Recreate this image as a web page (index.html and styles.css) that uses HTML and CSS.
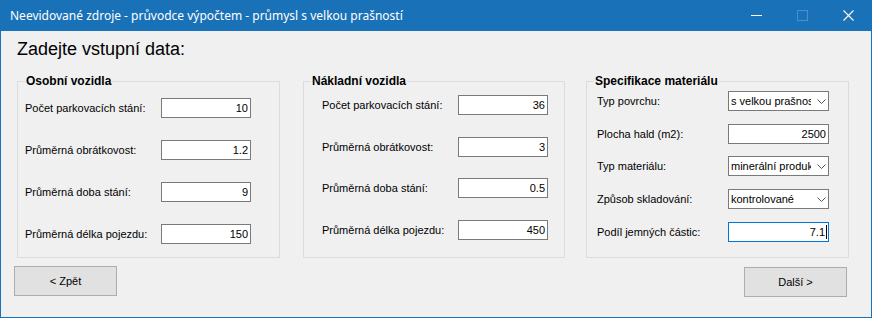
FILE: index.html
```html
<!DOCTYPE html>
<html lang="cs">
<head>
    <meta charset="UTF-8">
    <title>Neevidované zdroje</title>
    <link rel="stylesheet" href="styles.css">
</head>
<body>
    <div class="window">
        <div class="titlebar">
            <span class="title">Neevidované zdroje - průvodce výpočtem - průmysl s velkou prašností</span>
            <div class="controls">
                <span class="ctl ctl-min"></span>
                <span class="ctl ctl-max"></span>
                <svg class="ctl ctl-close" width="11" height="11" viewBox="0 0 11 11">
                    <path d="M0.5 0.5 L10.5 10.5 M10.5 0.5 L0.5 10.5" stroke="#fff" stroke-width="1.1"/>
                </svg>
            </div>
        </div>

        <div class="content">
            <h1>Zadejte vstupní data:</h1>

            <div class="groups">
                <fieldset class="group group-cars">
                    <legend>Osobní vozidla</legend>
                    <div class="rows">
                        <label>Počet parkovacích stání:</label><div class="textbox">10</div>
                        <label>Průměrná obrátkovost:</label><div class="textbox">1.2</div>
                        <label>Průměrná doba stání:</label><div class="textbox">9</div>
                        <label>Průměrná délka pojezdu:</label><div class="textbox">150</div>
                    </div>
                </fieldset>

                <fieldset class="group group-trucks">
                    <legend>Nákladní vozidla</legend>
                    <div class="rows">
                        <label>Počet parkovacích stání:</label><div class="textbox">36</div>
                        <label>Průměrná obrátkovost:</label><div class="textbox">3</div>
                        <label>Průměrná doba stání:</label><div class="textbox">0.5</div>
                        <label>Průměrná délka pojezdu:</label><div class="textbox">450</div>
                    </div>
                </fieldset>

                <fieldset class="group group-material">
                    <legend>Specifikace materiálu</legend>
                    <div class="rows">
                        <label>Typ povrchu:</label>
                        <div class="combo"><span class="combo-text">s velkou prašností</span><svg class="chevron" width="9" height="5" viewBox="0 0 9 5"><path d="M0.5 0.5 L4.5 4.5 L8.5 0.5" fill="none" stroke="#555" stroke-width="1"/></svg></div>
                        <label>Plocha hald (m2):</label><div class="textbox">2500</div>
                        <label>Typ materiálu:</label>
                        <div class="combo"><span class="combo-text">minerální produkty</span><svg class="chevron" width="9" height="5" viewBox="0 0 9 5"><path d="M0.5 0.5 L4.5 4.5 L8.5 0.5" fill="none" stroke="#555" stroke-width="1"/></svg></div>
                        <label>Způsob skladování:</label>
                        <div class="combo"><span class="combo-text">kontrolované</span><svg class="chevron" width="9" height="5" viewBox="0 0 9 5"><path d="M0.5 0.5 L4.5 4.5 L8.5 0.5" fill="none" stroke="#555" stroke-width="1"/></svg></div>
                        <label>Podíl jemných částic:</label><div class="textbox focused">7.1<span class="caret"></span></div>
                    </div>
                </fieldset>
            </div>

            <div class="buttons">
                <button class="btn btn-back">&lt; Zpět</button>
                <button class="btn btn-next">Další &gt;</button>
            </div>
        </div>
    </div>
</body>
</html>
```

FILE: styles.css
```css
body {
    margin: 0;
    padding: 0;
    background-color: #f0f0f0;
    font-family: "Liberation Sans", Arial, sans-serif;
}

.window {
    width: 872px;
    height: 318px;
    display: flex;
    flex-direction: column;
}

.titlebar {
    height: 31px;
    flex: none;
    background-color: #1971b8;
    color: #fff;
    display: flex;
    align-items: center;
    justify-content: space-between;
    padding-left: 10px;
}

.title {
    font-family: "Noto Sans", "Open Sans", sans-serif;
    font-size: 12px;
    padding-bottom: 1px;
}

.controls {
    display: flex;
    align-items: center;
    gap: 35px;
    padding-right: 18px;
}

.ctl {
    display: block;
    width: 11px;
    height: 11px;
    box-sizing: border-box;
}

.ctl-min {
    height: 1px;
    background-color: #fff;
}

.ctl-max {
    border: 1px solid #4d90c9;
}

.content {
    flex: 1;
    border: 1px solid #1971b8;
    border-top: none;
}

h1 {
    font-size: 18px;
    font-weight: normal;
    line-height: 21px;
    color: #000;
    margin: 8px 0 0 16px;
}

.groups {
    display: flex;
    margin: 14px 0 0 16px;
}

.group {
    box-sizing: border-box;
    height: 184px;
    margin: 0;
    padding: 0 7px;
    border: 1px solid #dcdcdc;
    font-size: 11px;
}

.group legend {
    font-size: 12px;
    font-weight: bold;
    line-height: 14px;
    padding: 0 1px;
    color: #000;
}

.group-cars {
    width: 263px;
}

.group-trucks {
    width: 262px;
    margin-left: 23px;
}

.group-material {
    width: 263px;
    margin-left: 21px;
}

.rows {
    display: grid;
    grid-template-columns: 136px 90px;
    grid-auto-rows: 20px;
    row-gap: 22px;
    align-items: center;
}

.group-cars .rows {
    padding-top: 10px;
}

.group-trucks .rows {
    padding-top: 7px;
    padding-left: 11px;
    row-gap: 21.7px;
}

.group-material .rows {
    padding-top: 3px;
    padding-left: 3px;
    grid-template-columns: 131px 101px;
    row-gap: 12.7px;
}

label {
    color: #000;
}

.textbox {
    box-sizing: border-box;
    height: 20px;
    background-color: #fff;
    border: 1px solid #7a7a7a;
    text-align: right;
    padding-right: 2px;
    line-height: 18px;
    font-size: 11px;
}

.textbox.focused {
    border-color: #0078d7;
    padding-right: 1px;
}

.caret {
    display: inline-block;
    width: 1px;
    height: 14px;
    background-color: #000;
    vertical-align: -3px;
    margin-left: 1px;
}

.combo {
    box-sizing: border-box;
    height: 20px;
    background-color: #fff;
    border: 1px solid #7a7a7a;
    display: flex;
    align-items: center;
    padding-left: 2px;
    font-size: 11px;
}

.combo-text {
    width: 80px;
    overflow: hidden;
    white-space: nowrap;
}

.chevron {
    margin-left: 6px;
}

.buttons {
    display: flex;
    justify-content: space-between;
    margin: 8px 24px 0 13px;
}

.btn {
    width: 103px;
    height: 30px;
    background-color: #e1e1e1;
    border: 1px solid #adadad;
    font-family: "Liberation Sans", Arial, sans-serif;
    font-size: 11px;
    color: #000;
    padding: 0;
}

.btn-next {
    margin-top: 1px;
}
```
